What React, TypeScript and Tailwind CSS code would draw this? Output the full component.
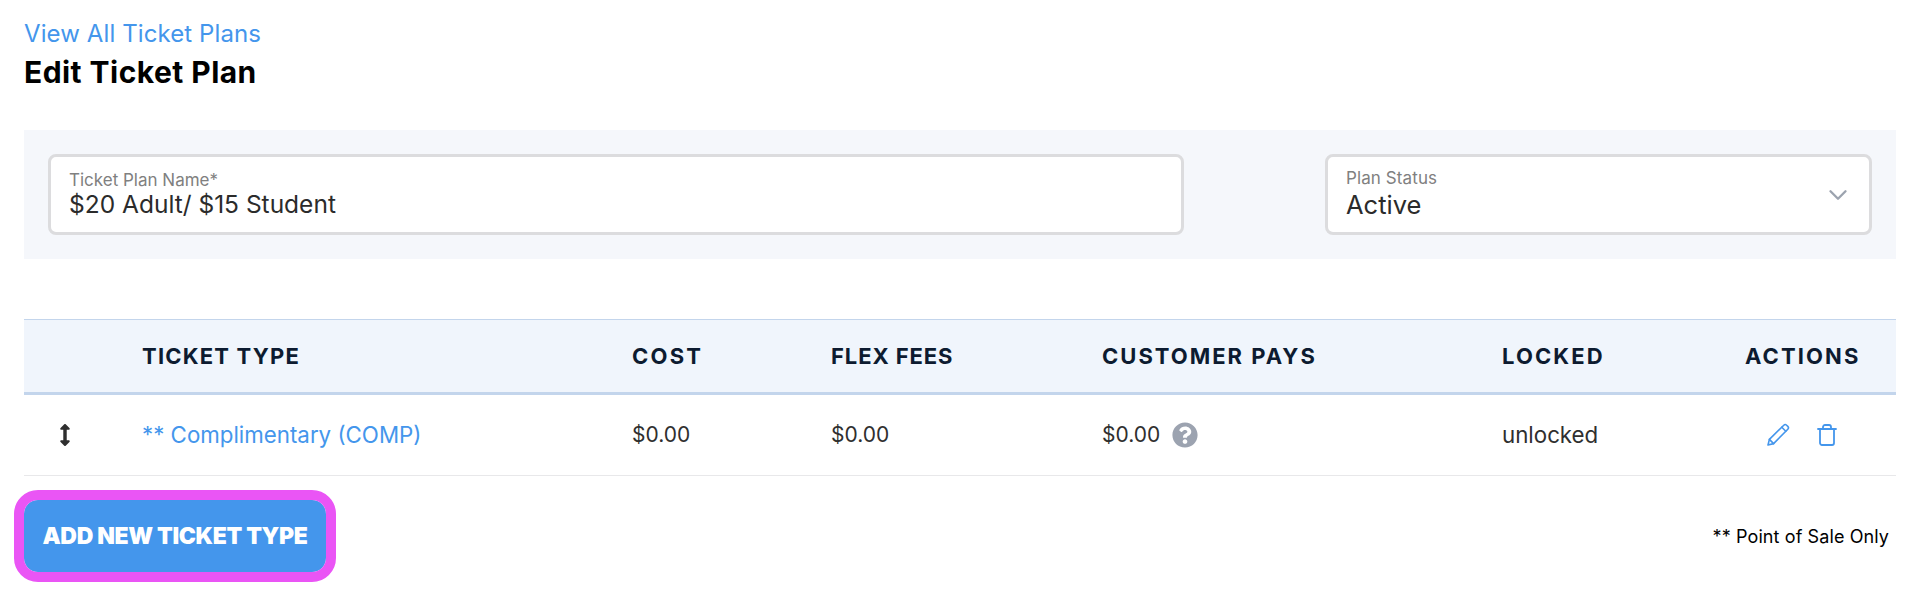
import { ChevronDown, Trash } from "lucide-react";
import { FaArrowsAltV, FaQuestionCircle } from "react-icons/fa";

const columns = "grid grid-cols-[118px_490px_199px_271px_400px_243px_1fr] items-center";

const headers = [
  { label: "", tracking: "" },
  { label: "TICKET TYPE", tracking: "tracking-[1.2px]" },
  { label: "COST", tracking: "tracking-[2.2px]" },
  { label: "FLEX FEES", tracking: "tracking-[0.9px]" },
  { label: "CUSTOMER PAYS", tracking: "tracking-[2px]" },
  { label: "LOCKED", tracking: "tracking-[2.1px]" },
  { label: "ACTIONS", tracking: "tracking-[2.1px]" },
];

function PencilIcon() {
  return (
    <svg width="24" height="24" viewBox="0 0 24 24" fill="none" stroke="#4496ec" strokeWidth="1.6" strokeLinejoin="round" strokeLinecap="round">
      <path d="M2 22l1.4-5.6L17.8 2.2a2 2 0 0 1 2.8 0l1.2 1.2a2 2 0 0 1 0 2.8L7.6 20.6 2 22z" />
      <path d="M3.4 16.4l4.2 4.2M15.8 4.2l4 4" />
    </svg>
  );
}

export default function App() {
  return (
    <main className="h-[604px] bg-white pl-6 pr-7 font-['Inter',sans-serif]">
      {/* Header */}
      <div className="pt-[18px]">
        <a className="block text-[24px] leading-[32px] tracking-[0.1px] text-[#4496ec]">View All Ticket Plans</a>
        <h1 className="mt-[2px] text-[30px] leading-[40px] font-bold text-black tracking-[0.45px]">Edit Ticket Plan</h1>
      </div>

      {/* Plan form */}
      <section className="mt-[38px] flex h-[129px] items-center justify-between bg-[#f5f7fb] px-6">
        <div className="flex h-[81px] w-[1136px] flex-col justify-center rounded-lg border-[3px] border-[#dcdcde] bg-white px-[18px]">
          <label className="text-[17px] leading-[20px] text-[#808080]">Ticket Plan Name*</label>
          <div className="-mt-px text-[24.5px] leading-[30px] text-[#2b2b2b]">$20 Adult/ $15 Student</div>
        </div>
        <div className="flex h-[81px] w-[547px] items-center justify-between rounded-lg border-[3px] border-[#dcdcde] bg-white pl-[18px] pr-[16px]">
          <div>
            <label className="block text-[17px] leading-[20px] tracking-[0.1px] text-[#808080]">Plan Status</label>
            <div className="mt-px text-[25.5px] leading-[32px] text-[#2b2b2b]">Active</div>
          </div>
          <ChevronDown size={30} strokeWidth={1.9} className="text-[#9ca3af]" />
        </div>
      </section>

      {/* Ticket types */}
      <section className="mt-[60px]">
        <div className={`${columns} h-[76px] border-t border-b-[3px] border-t-[#c3d5ec] border-b-[#c3d5ec] bg-[#f0f5fc]`}>
          {headers.map((h) => (
            <div key={h.label} className={`text-[22px] font-bold text-[#0d1b30] ${h.tracking}`}>{h.label}</div>
          ))}
        </div>
        <div className={`${columns} h-[81px] border-b border-[#e8e8ea] text-[21px] text-[#2f2f2f]`}>
          <div className="pl-[30px]"><FaArrowsAltV size={22} /></div>
          <a className="text-[22.3px] text-[#4496ec]">** Complimentary (COMP)</a>
          <div>$0.00</div>
          <div>$0.00</div>
          <div className="flex items-center gap-3">
            $0.00 <FaQuestionCircle size={26} className="text-[#9ca3b0]" />
          </div>
          <div className="text-[22.3px]">unlocked</div>
          <div className="flex items-center gap-[25px] pl-[21px]">
            <PencilIcon />
            <Trash size={24} strokeWidth={1.8} className="text-[#4496ec]" />
          </div>
        </div>
      </section>

      {/* Footer */}
      <div className="mt-6 flex items-center justify-between pr-[7px]">
        <button className="h-[72px] w-[302px] rounded-[14px] bg-[#4496ec] text-[23px] font-black tracking-[-0.35px] text-white outline-[10px] outline-[#ea55f5]">
          ADD NEW TICKET TYPE
        </button>
        <span className="text-[18px] tracking-[0.1px] text-black">** Point of Sale Only</span>
      </div>
    </main>
  );
}
